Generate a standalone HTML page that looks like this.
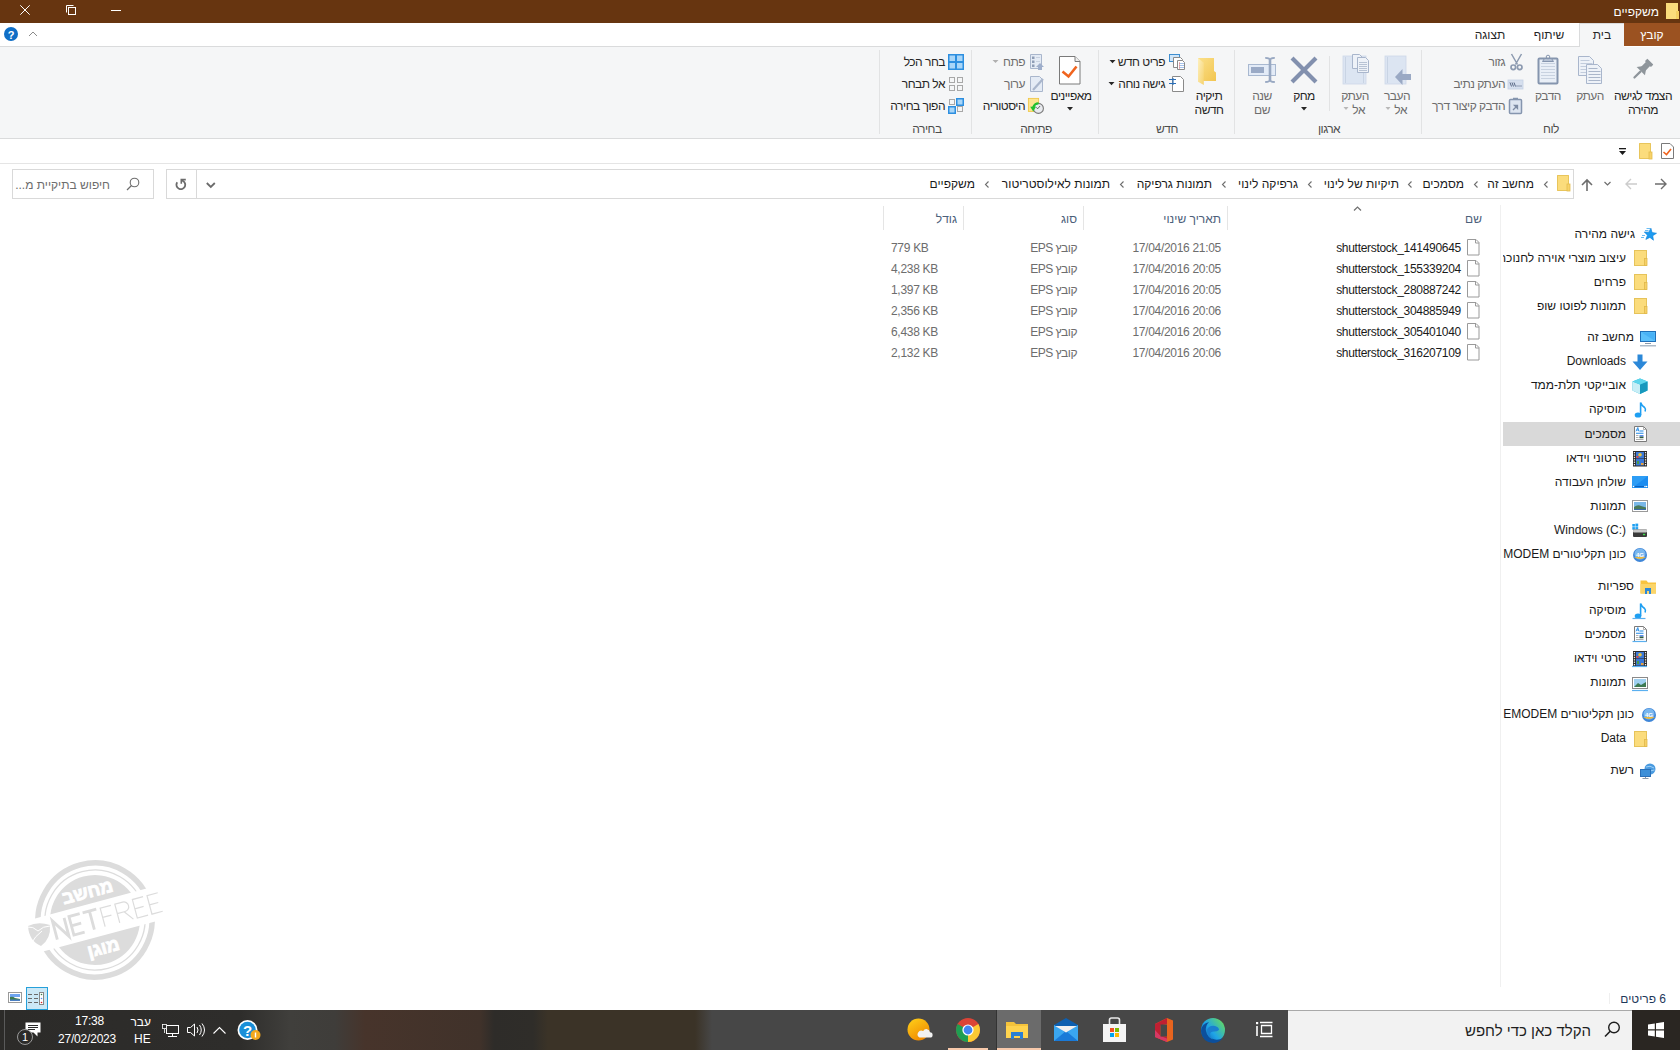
<!DOCTYPE html>
<html><head><meta charset="utf-8">
<style>
*{margin:0;padding:0;box-sizing:border-box}
html,body{width:1680px;height:1050px;overflow:hidden;background:#fff;font-family:"Liberation Sans",sans-serif;font-size:12px;color:#1e1e1e}
.a{position:absolute}
.t{position:absolute;white-space:nowrap;line-height:20px;font-size:12px}
.r{direction:rtl}
.rb{letter-spacing:-0.5px}
.c{text-align:center}
.l{letter-spacing:-0.3px}
svg{position:absolute;overflow:visible}
</style></head><body>

<!-- TITLE BAR -->
<div class="a" style="left:0;top:0;width:1680px;height:23px;background:#673510"></div>
<div class="t r" style="right:21px;top:2px;color:#fff">משקפיים</div>

<!-- TAB ROW -->
<div class="a" style="left:0;top:23px;width:1680px;height:24px;background:#fff"></div>
<div class="a" style="left:0;top:46px;width:1579px;height:1px;background:#dadbdc"></div>
<div class="a" style="left:1624px;top:23px;width:56px;height:23px;background:#9b5221"></div>
<div class="a" style="left:1579px;top:23px;width:45px;height:24px;background:#f5f6f7;border-left:1px solid #dadbdc;border-top:1px solid #dadbdc"></div>
<div class="t c r" style="left:1624px;width:56px;top:25px;color:#fff">קובץ</div>
<div class="t c r" style="left:1580px;width:44px;top:25px;color:#262626">בית</div>
<div class="t c r" style="left:1519px;width:60px;top:25px;color:#262626">שיתוף</div>
<div class="t c r" style="left:1460px;width:60px;top:25px;color:#262626">תצוגה</div>

<!-- RIBBON -->
<div class="a" style="left:0;top:47px;width:1680px;height:91px;background:#f5f6f7"></div>
<div class="a" style="left:0;top:138px;width:1680px;height:1px;background:#dadbdc"></div>
<!-- group separators -->
<div class="a" style="left:879px;top:50px;width:1px;height:84px;background:#e2e3e4"></div>
<div class="a" style="left:971px;top:50px;width:1px;height:84px;background:#e2e3e4"></div>
<div class="a" style="left:1098px;top:50px;width:1px;height:84px;background:#e2e3e4"></div>
<div class="a" style="left:1234px;top:50px;width:1px;height:84px;background:#e2e3e4"></div>
<div class="a" style="left:1329px;top:56px;width:1px;height:55px;background:#e2e3e4"></div>
<div class="a" style="left:1421px;top:50px;width:1px;height:84px;background:#e2e3e4"></div>

<!-- group labels -->
<div class="t c r rb" style="left:1511px;width:80px;top:119px;color:#4d4d4d">לוח</div>
<div class="t c r rb" style="left:1289px;width:80px;top:119px;color:#4d4d4d">ארגון</div>
<div class="t c r rb" style="left:1127px;width:80px;top:119px;color:#4d4d4d">חדש</div>
<div class="t c r rb" style="left:996px;width:80px;top:119px;color:#4d4d4d">פתיחה</div>
<div class="t c r rb" style="left:887px;width:80px;top:119px;color:#4d4d4d">בחירה</div>

<!-- clipboard group -->
<div class="t c r rb" style="left:1603px;width:80px;top:86px;color:#262626">הצמד לגישה</div>
<div class="t c r rb" style="left:1603px;width:80px;top:100px;color:#262626">מהירה</div>
<div class="t c r rb" style="left:1550px;width:80px;top:86px;color:#6d6d6d">העתק</div>
<div class="t c r rb" style="left:1508px;width:80px;top:86px;color:#6d6d6d">הדבק</div>
<div class="t r rb" style="right:175px;top:52px;color:#6d6d6d">גזור</div>
<div class="t r rb" style="right:175px;top:74px;color:#6d6d6d">העתק נתיב</div>
<div class="t r rb" style="right:175px;top:96px;color:#6d6d6d">הדבק קיצור דרך</div>

<!-- organize group -->
<div class="t c r rb" style="left:1357px;width:80px;top:86px;color:#6d6d6d">העבר</div>
<div class="t r rb" style="right:273px;top:100px;color:#6d6d6d">אל</div>
<div class="t c r rb" style="left:1315px;width:80px;top:86px;color:#6d6d6d">העתק</div>
<div class="t r rb" style="right:315px;top:100px;color:#6d6d6d">אל</div>
<div class="t c r rb" style="left:1264px;width:80px;top:86px;color:#262626">מחק</div>
<div class="t c r rb" style="left:1222px;width:80px;top:86px;color:#6d6d6d">שנה</div>
<div class="t c r rb" style="left:1222px;width:80px;top:100px;color:#6d6d6d">שם</div>

<!-- new group -->
<div class="t c r rb" style="left:1169px;width:80px;top:86px;color:#262626">תיקיה</div>
<div class="t c r rb" style="left:1169px;width:80px;top:100px;color:#262626">חדשה</div>
<div class="t r rb" style="right:515px;top:52px;color:#262626">פריט חדש</div>
<div class="t r rb" style="right:515px;top:74px;color:#262626">גישה נוחה</div>

<!-- open group -->
<div class="t c r rb" style="left:1031px;width:80px;top:86px;color:#262626">מאפיינים</div>
<div class="t r rb" style="right:655px;top:52px;color:#6d6d6d">פתח</div>
<div class="t r rb" style="right:655px;top:74px;color:#6d6d6d">ערוך</div>
<div class="t r rb" style="right:655px;top:96px;color:#262626">היסטוריה</div>

<!-- select group -->
<div class="t r rb" style="right:735px;top:52px;color:#262626">בחר הכל</div>
<div class="t r rb" style="right:735px;top:74px;color:#262626">אל תבחר</div>
<div class="t r rb" style="right:735px;top:96px;color:#262626">הפוך בחירה</div>

<!-- dropdown arrows -->
<svg style="left:0;top:0" width="1680" height="1050" viewBox="0 0 1680 1050">
 <path d="M1301 107h6l-3 3.5z" fill="#262626"/>
 <path d="M1067 107h6l-3 3.5z" fill="#262626"/>
 <path d="M1109.5 60h6l-3 3.2z" fill="#262626"/>
 <path d="M1108.5 82h6l-3 3.2z" fill="#262626"/>
 <path d="M992.5 60h6l-3 3z" fill="#b0b0b0"/>
 <path d="M1385.5 107h5l-2.5 3z" fill="#b8b8b8"/>
 <path d="M1343.5 107h5l-2.5 3z" fill="#b8b8b8"/>
</svg>



<svg style="left:0;top:0" width="1680" height="1050" viewBox="0 0 1680 1050">
<!-- pin -->
<g transform="translate(1642 70) rotate(45) scale(0.84)" fill="#8e959b">
 <rect x="-5" y="-14" width="10" height="4" rx="0.5"/>
 <rect x="-3.5" y="-10.5" width="7" height="8.5"/>
 <path d="M-3.5 -3 L-7 2 L7 2 L3.5 -3z"/>
 <rect x="-1.3" y="1.5" width="2.6" height="12.5" rx="1.2"/>
</g>
<!-- copy -->
<path d="M1578.5 56.5h11l4 4v15h-15z" fill="#eef2f8" stroke="#a9b6cc"/>
<path d="M1580.5 60.5h9 M1580.5 63.5h12 M1580.5 66.5h12 M1580.5 69.5h12 M1580.5 72.5h12" stroke="#c2ccdc"/>
<path d="M1586.5 64.5h11l4 4v15h-15z" fill="#eef2f8" stroke="#a9b6cc"/>
<path d="M1588.5 68.5h9 M1588.5 71.5h12 M1588.5 74.5h12 M1588.5 77.5h12 M1588.5 80.5h12" stroke="#aab6ca"/>
<!-- paste -->
<rect x="1538.5" y="58.5" width="19" height="25" rx="1" fill="#e9eff7" stroke="#8595ae" stroke-width="2"/>
<path d="M1541 63.5h14 M1541 66.5h14 M1541 69.5h14 M1541 72.5h14 M1541 75.5h14 M1541 78.5h14" stroke="#c8d2e0"/>
<path d="M1542.5 61.5l2-3h7l2 3z" fill="#b4c0d2" stroke="#8595ae"/>
<circle cx="1548" cy="57" r="1.8" fill="none" stroke="#8595ae"/>
<!-- scissors -->
<g stroke="#8c9ab0" fill="none">
 <path d="M1511.5 54 L1517.5 64.5 M1521.5 54 L1515.5 64.5" stroke-width="1.5"/>
 <circle cx="1513.3" cy="67.3" r="2.3" stroke-width="1.7"/><circle cx="1519.7" cy="67.3" r="2.3" stroke-width="1.7"/>
</g>
<!-- copy path -->
<rect x="1508" y="80" width="15" height="9" fill="#d6dfee" stroke="#c5d1e4" stroke-width="0.8"/>
<path d="M1510 82.5l1.5 4 M1512 82.5l1.5 4 M1514 82.5l1.5 4" stroke="#4a5a78" stroke-width="0.9"/>
<path d="M1516.5 86h1 M1518.5 86h1 M1520.5 86h1" stroke="#4a5a78"/>
<!-- paste shortcut -->
<rect x="1509.5" y="99.5" width="12" height="14" rx="1" fill="#dde5f0" stroke="#8595ae" stroke-width="1.5"/>
<path d="M1513 98.5h5" stroke="#8595ae" stroke-width="1.5"/>
<path d="M1513 110l4-4 M1514.5 105.5h3v3z" stroke="#7d8ba3" fill="#7d8ba3" stroke-width="1.3"/>

<!-- move to -->
<rect x="1385" y="56" width="21" height="28" fill="#dce5f2" stroke="#cdd8e8" stroke-width="0.8"/>
<path d="M1387.5 57v26" stroke="#c9d4e4"/>
<path d="M1395 77 L1402.5 69 V74 H1411 V80 H1402.5 V85z" fill="#9aa9c4"/>
<!-- copy to -->
<rect x="1343" y="56" width="23" height="28" fill="#dce5f2" stroke="#cdd8e8" stroke-width="0.8"/>
<path d="M1345.5 57v26 M1363.5 57v26" stroke="#c9d4e4"/>
<path d="M1352.5 54.5h7l3 3v11h-10z" fill="#eef2f8" stroke="#a9b6cc"/>
<path d="M1357.5 57.5h8l3 3v12h-11z" fill="#eef2f8" stroke="#a9b6cc"/>
<path d="M1359 62.5h8 M1359 64.5h8 M1359 66.5h8 M1359 68.5h8 M1359 70.5h8" stroke="#aab6ca" stroke-width="0.8"/>
<!-- delete -->
<path d="M1293.5 59.5 L1314.5 80.5 M1314.5 59.5 L1293.5 80.5" stroke="#8290ae" stroke-width="4.2" stroke-linecap="square"/>
<!-- rename -->
<rect x="1248.5" y="64.5" width="27" height="11" fill="#e3ebf7" stroke="#a8b8d0"/>
<rect x="1251" y="67" width="13" height="6" fill="#9aaac6"/>
<path d="M1270 59.5v21" stroke="#98a8c2" stroke-width="2.6"/>
<path d="M1265.2 57.8 q4.8 0 4.8 2.5 q0 -2.5 4.8 -2.5 M1265.2 82 q4.8 0 4.8 -2.5 q0 2.5 4.8 2.5" fill="none" stroke="#98a8c2" stroke-width="1.8"/>
<!-- new folder -->
<defs><linearGradient id="nfb" x1="0" y1="0" x2="1" y2="1"><stop offset="0" stop-color="#fbe08a"/><stop offset="1" stop-color="#f2c550"/></linearGradient>
<linearGradient id="nff" x1="0" y1="0" x2="1" y2="1"><stop offset="0" stop-color="#fdf0c0"/><stop offset="1" stop-color="#f6d26c"/></linearGradient></defs>
<path d="M1198 58 H1214 V71 L1216 72.5 V81 H1203 L1198 81.5z" fill="url(#nfb)"/>
<path d="M1198 58 L1203.8 62.8 V85 L1198 81.8z" fill="url(#nff)"/>
<!-- new item -->
<rect x="1169.5" y="54.5" width="10" height="7" fill="#cfe6fa" stroke="#3e8ed0"/>
<path d="M1173.5 57.5h7l2 2v8h-9z" fill="#fff" stroke="#8a8a8a"/>
<path d="M1177.5 60.5h5l2 2v7h-7z" fill="#fff" stroke="#8a8a8a"/>
<path d="M1179 63.5h5 M1179 65.5h5 M1179 67.5h5" stroke="#8fb4e6" stroke-width="0.8"/>
<path d="M1179.5 62v7" stroke="#e57a7a" stroke-width="0.6"/>
<!-- easy access -->
<path d="M1172.5 76.5h8l3 3v12h-11z" fill="#fff" stroke="#8a8a8a"/>
<path d="M1169 79.5h7 M1169 83.5h7 M1173 78v7" stroke="#2a6fb8" stroke-width="1.1"/>
<!-- properties -->
<path d="M1059.5 56.5h15.5l5 5v22.5h-20.5z" fill="#fff" stroke="#7a7a7a"/>
<path d="M1075 56.5v5h5" fill="#eee" stroke="#7a7a7a"/>
<path d="M1062.5 71.5 L1068.5 76.5 L1076.5 66.5" fill="none" stroke="#f0641e" stroke-width="2.6"/>
<!-- open -->
<path d="M1030.5 54.5h11v14h-11z" fill="#e4ebf5" stroke="#a9b6cc"/>
<path d="M1032 56.5h2.5v2.5h-2.5z M1032 60.5h2.5v2.5h-2.5z M1032 64.5h2.5v2.5h-2.5z" fill="#8e9db6"/>
<path d="M1036 57.5h4 M1036 61.5h4" stroke="#c0cadb" stroke-width="0.8"/>
<path d="M1040 63 L1044 67 H1042 V70 H1038 V67 H1036z" fill="#9eaecb"/>
<!-- edit -->
<path d="M1030.5 76.5h9l3 3v12h-12z" fill="#e4ebf5" stroke="#a9b6cc"/>
<path d="M1033 90 L1043 79" stroke="#a9b6cc" stroke-width="2.2"/>
<!-- history -->
<rect x="1028.4" y="98.4" width="10.2" height="13" fill="#fde58f" stroke="#efc84a" stroke-width="0.9"/>
<circle cx="1038.4" cy="108.4" r="5" fill="#e9ebef" stroke="#7a7a7a" stroke-width="1.1"/>
<path d="M1036.3 107.3 l1.3 1.5 l2.5 -2.8" stroke="#444" stroke-width="0.8" fill="none"/>
<path d="M1038.5 103.4 q-4 0 -5.2 4" stroke="#22c02e" stroke-width="2.2" fill="none"/>
<path d="M1030.2 106.8 L1036.2 106.4 L1033.2 111.4z" fill="#22c02e"/>
<!-- select all -->
<rect x="948" y="54" width="16" height="16" fill="#2d8fe0"/>
<rect x="949.5" y="55.5" width="5.5" height="5.5" fill="#a9d6f8"/>
<rect x="957" y="55.5" width="5.5" height="5.5" fill="#a9d6f8"/>
<rect x="949.5" y="63" width="5.5" height="5.5" fill="#a9d6f8"/>
<rect x="957" y="63" width="5.5" height="5.5" fill="#a9d6f8"/>
<!-- select none -->
<g fill="none" stroke="#a8a8a8">
<rect x="949.5" y="77.5" width="5" height="5"/><rect x="957.5" y="77.5" width="5" height="5"/>
<rect x="949.5" y="85.5" width="5" height="5"/><rect x="957.5" y="85.5" width="5" height="5"/>
<rect x="949.5" y="99.5" width="5" height="5"/><rect x="957.5" y="106.5" width="5" height="5"/>
</g>
<!-- invert -->
<rect x="956" y="98" width="8" height="8" fill="#2d8fe0"/><rect x="957.5" y="99.5" width="5" height="5" fill="#a9d6f8"/>
<rect x="948" y="106" width="8" height="8" fill="#2d8fe0"/><rect x="949.5" y="107.5" width="5" height="5" fill="#a9d6f8"/>
</svg>

<!-- QAT ROW -->
<div class="a" style="left:0;top:163px;width:1680px;height:1px;background:#e5e5e5"></div>

<!-- ADDRESS ROW -->
<div class="a" style="left:166px;top:169px;width:1408px;height:30px;border:1px solid #d9d9d9"></div>
<div class="a" style="left:196px;top:170px;width:1px;height:28px;background:#d9d9d9"></div>
<div class="a" style="left:12px;top:169px;width:142px;height:30px;border:1px solid #d9d9d9"></div>
<div class="t r" style="right:1570px;top:175px;color:#6d6d6d">חיפוש בתיקיית מ...</div>

<!-- QAT icons -->
<svg style="left:0;top:0" width="1680" height="1050" viewBox="0 0 1680 1050">
 <path d="M1661.5 143.5h8.5l3.5 3.5v11.5h-12z" fill="#fff" stroke="#7a7a7a"/>
 <path d="M1663.5 152 l3 2.5 l4.5-5.5" fill="none" stroke="#f0641e" stroke-width="1.6"/>
 <rect x="1639" y="143" width="12" height="16" fill="#fbdc7c"/>
 <path d="M1639.5 143.5h11v15h-11z" fill="none" stroke="#e8c55c"/>
 <rect x="1649" y="152" width="3" height="7" fill="#f7d26a" stroke="#e3bc4c" stroke-width="0.8"/>
 <rect x="1619" y="148" width="7" height="1.3" fill="#1a1a1a"/>
 <path d="M1619 151h7l-3.5 4z" fill="#1a1a1a"/>
 <!-- nav arrows -->
 <path d="M1655 184h11 M1661 179l5 5l-5 5" fill="none" stroke="#6d6d6d" stroke-width="1.4"/>
 <path d="M1637 184h-11 M1631 179l-5 5l5 5" fill="none" stroke="#cccccc" stroke-width="1.4"/>
 <path d="M1604.5 182l3 3l3-3" fill="none" stroke="#6d6d6d" stroke-width="1.2"/>
 <path d="M1587 191v-11 M1582 185l5-5l5 5" fill="none" stroke="#6d6d6d" stroke-width="1.6"/>
 <!-- address folder -->
 <rect x="1557" y="175" width="12" height="16" fill="#fbdc7c"/>
 <path d="M1557.5 175.5h11v15h-11z" fill="none" stroke="#e8c55c"/>
 <rect x="1567" y="184" width="3" height="7" fill="#f7d26a" stroke="#e3bc4c" stroke-width="0.8"/>
 <!-- refresh, dropdown -->
 <path d="M177.2 182.3 A4.4 4.4 0 1 0 181.3 180.4" fill="none" stroke="#6b6b6b" stroke-width="1.8"/>
 <path d="M185.8 179.6 h-4.5 v4.2" fill="none" stroke="#6b6b6b" stroke-width="1.6"/>
 
 <path d="M206.8 183l4 4l4-4" fill="none" stroke="#6b6b6b" stroke-width="1.8"/>
 <!-- search magnifier -->
 <circle cx="134.5" cy="182.5" r="4.3" fill="none" stroke="#6d6d6d" stroke-width="1.1"/>
 <path d="M131.5 185.5 L127 190" stroke="#6d6d6d" stroke-width="1.2"/>
 <!-- breadcrumb chevrons -->
 <g fill="none" stroke="#6d6d6d" stroke-width="1.1">
 <path d="M1547.5 181.5l-3 3l3 3"/>
 <path d="M1477.5 181.5l-3 3l3 3"/>
 <path d="M1411.5 181.5l-3 3l3 3"/>
 <path d="M1311.5 181.5l-3 3l3 3"/>
 <path d="M1225.5 181.5l-3 3l3 3"/>
 <path d="M1123.5 181.5l-3 3l3 3"/>
 <path d="M988.5 181.5l-3 3l3 3"/>
 </g>
 <!-- sort arrow -->
 <path d="M1354 210.5l3.5-3.5l3.5 3.5" fill="none" stroke="#707070" stroke-width="1.2"/>
 <!-- file icons -->
 <g fill="#fff" stroke="#9a9a9a">
 <path d="M1467.5 239.5h8.5l3 3v12.5h-11.5z"/><path d="M1475.5 239.5v3.5h3.5" fill="none"/>
 <path d="M1467.5 260.5h8.5l3 3v12.5h-11.5z"/><path d="M1475.5 260.5v3.5h3.5" fill="none"/>
 <path d="M1467.5 281.5h8.5l3 3v12.5h-11.5z"/><path d="M1475.5 281.5v3.5h3.5" fill="none"/>
 <path d="M1467.5 302.5h8.5l3 3v12.5h-11.5z"/><path d="M1475.5 302.5v3.5h3.5" fill="none"/>
 <path d="M1467.5 323.5h8.5l3 3v12.5h-11.5z"/><path d="M1475.5 323.5v3.5h3.5" fill="none"/>
 <path d="M1467.5 344.5h8.5l3 3v12.5h-11.5z"/><path d="M1475.5 344.5v3.5h3.5" fill="none"/>
 </g>
</svg>

<!-- breadcrumbs -->
<div class="t r" style="right:146px;top:174px;color:#1a1a1a">מחשב זה</div>
<div class="t r" style="right:216px;top:174px;color:#1a1a1a">מסמכים</div>
<div class="t r" style="right:281px;top:174px;color:#1a1a1a">תיקיות של לינוי</div>
<div class="t r" style="right:382px;top:174px;color:#1a1a1a">גרפיקה לינוי</div>
<div class="t r" style="right:468px;top:174px;color:#1a1a1a">תמונות גרפיקה</div>
<div class="t r" style="right:570px;top:174px;color:#1a1a1a">תמונות לאילוסטריטור</div>
<div class="t r" style="right:705px;top:174px;color:#1a1a1a">משקפיים</div>

<!-- column headers -->
<div class="a" style="left:883px;top:206px;width:1px;height:24px;background:#e5e5e5"></div>
<div class="a" style="left:963px;top:206px;width:1px;height:24px;background:#e5e5e5"></div>
<div class="a" style="left:1083px;top:206px;width:1px;height:24px;background:#e5e5e5"></div>
<div class="a" style="left:1227px;top:206px;width:1px;height:24px;background:#e5e5e5"></div>
<div class="t r" style="right:198px;top:209px;color:#4c607a">שם</div>
<div class="t r" style="right:459px;top:209px;color:#4c607a">תאריך שינוי</div>
<div class="t r" style="right:603px;top:209px;color:#4c607a">סוג</div>
<div class="t r" style="right:723px;top:209px;color:#4c607a">גודל</div>


<!-- CONTENT -->
<div class="a" style="left:1500px;top:205px;width:1px;height:782px;background:#f0f0f0"></div>
<!-- rows -->
<div class="t l" style="right:219px;top:238px;color:#1a1a1a">shutterstock_141490645</div>
<div class="t l" style="right:459px;top:238px;color:#6d6d6d">17/04/2016 21:05</div>
<div class="t r rb" style="right:603px;top:238px;color:#6d6d6d">קובץ EPS</div>
<div class="t l" style="left:891px;top:238px;color:#6d6d6d">779 KB</div>
<div class="t l" style="right:219px;top:259px;color:#1a1a1a">shutterstock_155339204</div>
<div class="t l" style="right:459px;top:259px;color:#6d6d6d">17/04/2016 20:05</div>
<div class="t r rb" style="right:603px;top:259px;color:#6d6d6d">קובץ EPS</div>
<div class="t l" style="left:891px;top:259px;color:#6d6d6d">4,238 KB</div>
<div class="t l" style="right:219px;top:280px;color:#1a1a1a">shutterstock_280887242</div>
<div class="t l" style="right:459px;top:280px;color:#6d6d6d">17/04/2016 20:05</div>
<div class="t r rb" style="right:603px;top:280px;color:#6d6d6d">קובץ EPS</div>
<div class="t l" style="left:891px;top:280px;color:#6d6d6d">1,397 KB</div>
<div class="t l" style="right:219px;top:301px;color:#1a1a1a">shutterstock_304885949</div>
<div class="t l" style="right:459px;top:301px;color:#6d6d6d">17/04/2016 20:06</div>
<div class="t r rb" style="right:603px;top:301px;color:#6d6d6d">קובץ EPS</div>
<div class="t l" style="left:891px;top:301px;color:#6d6d6d">2,356 KB</div>
<div class="t l" style="right:219px;top:322px;color:#1a1a1a">shutterstock_305401040</div>
<div class="t l" style="right:459px;top:322px;color:#6d6d6d">17/04/2016 20:06</div>
<div class="t r rb" style="right:603px;top:322px;color:#6d6d6d">קובץ EPS</div>
<div class="t l" style="left:891px;top:322px;color:#6d6d6d">6,438 KB</div>
<div class="t l" style="right:219px;top:343px;color:#1a1a1a">shutterstock_316207109</div>
<div class="t l" style="right:459px;top:343px;color:#6d6d6d">17/04/2016 20:06</div>
<div class="t r rb" style="right:603px;top:343px;color:#6d6d6d">קובץ EPS</div>
<div class="t l" style="left:891px;top:343px;color:#6d6d6d">2,132 KB</div>

<!-- NAV -->
<div class="a" style="left:1503px;top:422px;width:177px;height:24px;background:#d9d9d9"></div>
<div class="a" style="left:1503px;top:205px;width:177px;height:780px;overflow:hidden">
<div class="t r" style="right:45px;top:19px;color:#1a1a1a">גישה מהירה</div>
<div class="t r" style="right:54px;top:43px;color:#1a1a1a">עיצוב מוצרי אוירה לחנוכה</div>
<div class="t r" style="right:54px;top:67px;color:#1a1a1a">פרחים</div>
<div class="t r" style="right:54px;top:91px;color:#1a1a1a">תמונות לפוטו שופ</div>
<div class="t r" style="right:46px;top:122px;color:#1a1a1a">מחשב זה</div>
<div class="t" style="right:54px;top:146px;color:#1a1a1a">Downloads</div>
<div class="t r" style="right:54px;top:170px;color:#1a1a1a">אובייקטי תלת-ממד</div>
<div class="t r" style="right:54px;top:194px;color:#1a1a1a">מוסיקה</div>
<div class="t r" style="right:54px;top:219px;color:#1a1a1a">מסמכים</div>
<div class="t r" style="right:54px;top:243px;color:#1a1a1a">סרטוני וידאו</div>
<div class="t r" style="right:54px;top:267px;color:#1a1a1a">שולחן העבודה</div>
<div class="t r" style="right:54px;top:291px;color:#1a1a1a">תמונות</div>
<div class="t" style="right:54px;top:315px;color:#1a1a1a">Windows (C:)</div>
<div class="t r" style="right:54px;top:339px;color:#1a1a1a">כונן תקליטורים MODEM</div>
<div class="t r" style="right:46px;top:371px;color:#1a1a1a">ספריות</div>
<div class="t r" style="right:54px;top:395px;color:#1a1a1a">מוסיקה</div>
<div class="t r" style="right:54px;top:419px;color:#1a1a1a">מסמכים</div>
<div class="t r" style="right:54px;top:443px;color:#1a1a1a">סרטי וידאו</div>
<div class="t r" style="right:54px;top:467px;color:#1a1a1a">תמונות</div>
<div class="t r" style="right:46px;top:499px;color:#1a1a1a">כונן תקליטורים EMODEM</div>
<div class="t" style="right:54px;top:523px;color:#1a1a1a">Data</div>
<div class="t r" style="right:46px;top:555px;color:#1a1a1a">רשת</div>
</div>
<svg style="left:0;top:0" width="1680" height="1050" viewBox="0 0 1680 1050">
<g><path d="M1650.88 228.14 L1652.07 232.52 L1656.56 233.25 L1652.76 235.74 L1653.45 240.23 L1649.91 237.38 L1645.85 239.43 L1647.46 235.18 L1644.26 231.96 L1648.80 232.18z" fill="#1e9bf0" stroke="#0a7fd8" stroke-width="0.6" stroke-linejoin="round"/><path d="M1646.5 228.5h3.5 M1645 230.5h3.5 M1642 235.5h3 M1641 237.5h3" stroke="#3aa6f0" stroke-width="1" opacity="0.75"/></g>
<g transform="translate(1634 250)"><rect x="0.5" y="0.5" width="12" height="15" fill="#fbdc7c" stroke="#e6c35a"/><rect x="10.5" y="8.5" width="2.5" height="7" fill="#f6d068" stroke="#e0b84a" stroke-width="0.8"/></g>
<g transform="translate(1634 274)"><rect x="0.5" y="0.5" width="12" height="15" fill="#fbdc7c" stroke="#e6c35a"/><rect x="10.5" y="8.5" width="2.5" height="7" fill="#f6d068" stroke="#e0b84a" stroke-width="0.8"/></g>
<g transform="translate(1634 298)"><rect x="0.5" y="0.5" width="12" height="15" fill="#fbdc7c" stroke="#e6c35a"/><rect x="10.5" y="8.5" width="2.5" height="7" fill="#f6d068" stroke="#e0b84a" stroke-width="0.8"/></g>
<g transform="translate(1640 331)"><rect x="0.5" y="0.5" width="15" height="10" fill="#5cc0fa" stroke="#1f6fb8"/><path d="M1.5 1.5h13v8z" fill="#3aa6f2" opacity="0.6"/><path d="M5 12.5h6" stroke="#8a9aaa" stroke-width="1"/><path d="M0 14.8h16" stroke="#9aaabb" stroke-width="1.2"/></g>
<g transform="translate(1632 354)"><path d="M5.5 0.5h5v7h5l-7.5 8.5l-7.5-8.5h5z" fill="#2b88d8"/></g>
<g transform="translate(1632 378)"><path d="M8 0.5l7.5 3v9l-7.5 3.5l-7.5-3.5v-9z" fill="#22b8d8"/><path d="M0.5 3.5l7.5 3v9.5l-7.5-3.5z" fill="#c8eef6"/><path d="M8 6.5l7.5-3v9l-7.5 3.5z" fill="#1798bd"/><path d="M8 0.5l7.5 3l-7.5 3l-7.5-3z" fill="#5fd6ec"/></g>
<g transform="translate(1632 402)"><ellipse cx="6" cy="13" rx="3.3" ry="2.6" fill="#1e9ff2"/><path d="M8.6 13V0.5 q1 3 4 5 q1.5 1.5 0.5 4" fill="none" stroke="#1e9ff2" stroke-width="1.6"/></g>
<g transform="translate(1632 426)"><path d="M2.5 0.5h9l3 3v12h-12z" fill="#fff" stroke="#7a7a7a"/><path d="M11.5 0.5v3h3" fill="none" stroke="#9a9a9a" stroke-width="0.8"/><path d="M4 5.3 L5.8 1.5 L6.8 5.3 M4.6 4h2" stroke="#1e88e5" stroke-width="0.9" fill="none"/><path d="M7.5 5h4 M4 7.2h7.5" stroke="#1e88e5" stroke-width="1.1"/><path d="M4 9.5h2.5 M4 11.5h2.5 M4 13.5h7.5" stroke="#9a9a9a" stroke-width="0.8"/><rect x="7.5" y="9" width="4" height="1.6" fill="#5a8ef0"/><rect x="7.5" y="10.6" width="4" height="1.6" fill="#2f5a3a"/></g>
<g transform="translate(1633 451)"><rect x="0" y="0" width="14" height="15.5" fill="#2a2a2a"/><rect x="3" y="1" width="8" height="6.5" fill="#3a78d8"/><rect x="3" y="8" width="8" height="6.5" fill="#3a78d8"/><circle cx="7" cy="3.8" r="1.8" fill="#e8c23a"/><rect x="3.5" y="5" width="2" height="2" fill="#d44"/><rect x="8" y="12" width="2.5" height="2" fill="#e8a03a"/><rect x="4" y="10" width="2" height="3" fill="#4a9a4a"/><rect x="0.8" y="1.0" width="1.3" height="1.3" fill="#eee"/><rect x="11.9" y="1.0" width="1.3" height="1.3" fill="#eee"/><rect x="0.8" y="3.4" width="1.3" height="1.3" fill="#eee"/><rect x="11.9" y="3.4" width="1.3" height="1.3" fill="#eee"/><rect x="0.8" y="5.8" width="1.3" height="1.3" fill="#eee"/><rect x="11.9" y="5.8" width="1.3" height="1.3" fill="#eee"/><rect x="0.8" y="8.2" width="1.3" height="1.3" fill="#eee"/><rect x="11.9" y="8.2" width="1.3" height="1.3" fill="#eee"/><rect x="0.8" y="10.6" width="1.3" height="1.3" fill="#eee"/><rect x="11.9" y="10.6" width="1.3" height="1.3" fill="#eee"/><rect x="0.8" y="13.0" width="1.3" height="1.3" fill="#eee"/><rect x="11.9" y="13.0" width="1.3" height="1.3" fill="#eee"/></g>
<g transform="translate(1632 474)"><rect x="0" y="2" width="16" height="12" fill="#1a8cf0"/><path d="M0 2h16l-16 12z" fill="#3aa8f8" opacity="0.6"/><path d="M1.5 12.5h13" stroke="#0b63c0" stroke-width="1"/><circle cx="1.6" cy="12.5" r="0.8" fill="#fff"/><circle cx="13" cy="12.5" r="0.8" fill="#fff"/><circle cx="14.6" cy="12.5" r="0.8" fill="#fff"/></g>
<g transform="translate(1632 498)"><rect x="0.5" y="2.5" width="15" height="11" fill="#fff" stroke="#9a9a9a"/><rect x="2" y="4" width="12" height="8" fill="#7ab8e8"/><path d="M2 9 q4 -3 7 -1 l5 1.5 V12 H2z" fill="#4a7a5a"/><path d="M2 11 h12 v1 h-12z" fill="#3a6aa8"/></g>
<g transform="translate(1632 523)"><rect x="0.3" y="1" width="2.6" height="2.6" fill="#1ea0f2"/><rect x="3.4" y="0.6" width="2.8" height="3" fill="#1ea0f2"/><rect x="0.3" y="4.1" width="2.6" height="2.6" fill="#1ea0f2"/><rect x="3.4" y="4.1" width="2.8" height="2.6" fill="#1ea0f2"/><rect x="1" y="6.5" width="14" height="7.5" rx="1" fill="#3a3a3a"/><rect x="1" y="6.5" width="14" height="3" rx="1" fill="#c9c9c9"/><rect x="11" y="10.8" width="2.2" height="1.4" fill="#3ee04a"/></g>
<g transform="translate(1632 547)"><circle cx="8" cy="8" r="7" fill="#3f86d8"/><circle cx="8" cy="7" r="5.5" fill="#7ab7ee"/><path d="M2 10 q6 4 12 0" fill="#e8b840"/><text x="8" y="10" font-size="6" font-family="Liberation Sans" font-weight="bold" fill="#fff" text-anchor="middle">4G</text></g>
<g transform="translate(1640 579)"><path d="M0.5 1.5h6l1.5 2h8v11h-15.5z" fill="#f8c440"/><rect x="0.5" y="5" width="15.5" height="9.5" fill="#fbd56a"/><path d="M5 15v-6h6v6h-2v-3h-2v3z" fill="#2b88d8"/></g>
<g transform="translate(1632 603)"><ellipse cx="6" cy="13" rx="3.3" ry="2.6" fill="#1e9ff2"/><path d="M8.6 13V0.5 q1 3 4 5 q1.5 1.5 0.5 4" fill="none" stroke="#1e9ff2" stroke-width="1.6"/><path d="M0.5 15.5h13" stroke="#5ab0f0" stroke-width="1.2"/></g>
<g transform="translate(1632 626)"><path d="M2.5 0.5h9l3 3v12h-12z" fill="#fff" stroke="#7a7a7a"/><path d="M11.5 0.5v3h3" fill="none" stroke="#9a9a9a" stroke-width="0.8"/><path d="M4 5.3 L5.8 1.5 L6.8 5.3 M4.6 4h2" stroke="#1e88e5" stroke-width="0.9" fill="none"/><path d="M7.5 5h4 M4 7.2h7.5" stroke="#1e88e5" stroke-width="1.1"/><path d="M4 9.5h2.5 M4 11.5h2.5 M4 13.5h7.5" stroke="#9a9a9a" stroke-width="0.8"/><rect x="7.5" y="9" width="4" height="1.6" fill="#5a8ef0"/><rect x="7.5" y="10.6" width="4" height="1.6" fill="#2f5a3a"/><path d="M0.5 15.5h14" stroke="#5ab0f0" stroke-width="1.2"/></g>
<g transform="translate(1633 651)"><rect x="0" y="0" width="14" height="15.5" fill="#2a2a2a"/><rect x="3" y="1" width="8" height="6.5" fill="#3a78d8"/><rect x="3" y="8" width="8" height="6.5" fill="#3a78d8"/><circle cx="7" cy="3.8" r="1.8" fill="#e8c23a"/><rect x="3.5" y="5" width="2" height="2" fill="#d44"/><rect x="8" y="12" width="2.5" height="2" fill="#e8a03a"/><rect x="4" y="10" width="2" height="3" fill="#4a9a4a"/><rect x="0.8" y="1.0" width="1.3" height="1.3" fill="#eee"/><rect x="11.9" y="1.0" width="1.3" height="1.3" fill="#eee"/><rect x="0.8" y="3.4" width="1.3" height="1.3" fill="#eee"/><rect x="11.9" y="3.4" width="1.3" height="1.3" fill="#eee"/><rect x="0.8" y="5.8" width="1.3" height="1.3" fill="#eee"/><rect x="11.9" y="5.8" width="1.3" height="1.3" fill="#eee"/><rect x="0.8" y="8.2" width="1.3" height="1.3" fill="#eee"/><rect x="11.9" y="8.2" width="1.3" height="1.3" fill="#eee"/><rect x="0.8" y="10.6" width="1.3" height="1.3" fill="#eee"/><rect x="11.9" y="10.6" width="1.3" height="1.3" fill="#eee"/><rect x="0.8" y="13.0" width="1.3" height="1.3" fill="#eee"/><rect x="11.9" y="13.0" width="1.3" height="1.3" fill="#eee"/><path d="M-1 15.5h15" stroke="#5ab0f0" stroke-width="1.2"/></g>
<g transform="translate(1632 675)"><rect x="0.5" y="2.5" width="15" height="11" fill="#fff" stroke="#8a8a8a"/><rect x="2" y="4" width="12" height="8" fill="#9fd0f0"/><path d="M2 12 L6 8 L9 10 L14 7 V12z" fill="#3d7a52"/><path d="M0 15.5h16" stroke="#5ab0f0" stroke-width="1.2"/></g>
<g transform="translate(1641 707)"><circle cx="8" cy="8" r="7" fill="#3f86d8"/><circle cx="8" cy="7" r="5.5" fill="#7ab7ee"/><path d="M2 10 q6 4 12 0" fill="#e8b840"/><text x="8" y="10" font-size="6" font-family="Liberation Sans" font-weight="bold" fill="#fff" text-anchor="middle">4G</text></g>
<g transform="translate(1634 731)"><rect x="0.5" y="0.5" width="12" height="15" fill="#fbdc7c" stroke="#e6c35a"/><rect x="10.5" y="8.5" width="2.5" height="7" fill="#f6d068" stroke="#e0b84a" stroke-width="0.8"/></g>
<g transform="translate(1640 763)"><circle cx="10" cy="6" r="5.5" fill="#4a9be0"/><path d="M6 4 q4 -2 8 1 M5.5 7 q4 2 9 0" stroke="#9fd0f7" fill="none"/><rect x="0.5" y="6.5" width="10" height="7" fill="#3c8fd8" stroke="#2a70b8"/><path d="M5.5 14v2 M2.5 15.5h6" stroke="#8a9aaa"/></g>
</svg>


<!-- STATUS -->
<div class="t r" style="right:14px;top:989px;color:#1e395b">6 פריטים</div>
<div class="a" style="left:1609px;top:993px;width:1px;height:11px;background:#efefef"></div>

<!-- TITLE ICONS -->
<svg style="left:0;top:0" width="1680" height="1050" viewBox="0 0 1680 1050">
 <path d="M20.3 5.3l9.4 9.4 M29.7 5.3l-9.4 9.4" stroke="#fff" stroke-width="1"/>
 <path d="M66.5 12.5v-7h7" fill="none" stroke="#fff"/>
 <rect x="68.5" y="7.5" width="7" height="7" fill="none" stroke="#fff"/>
 <path d="M111 10.5h10" stroke="#fff"/>
 <rect x="1666" y="3" width="12" height="16" fill="#fbdc7c"/>
 <rect x="1676" y="11" width="3" height="8" fill="#f4cf63"/>
 <!-- help -->
 <circle cx="11" cy="34" r="7" fill="#0f6ec6"/>
 <text x="11" y="38.5" font-family="Liberation Sans" font-weight="bold" font-size="11" fill="#fff" text-anchor="middle">?</text>
 <path d="M29 36l4-4l4 4" fill="none" stroke="#8a8a8a" stroke-width="1"/>
 <!-- view buttons -->
 <rect x="8.5" y="992.5" width="13" height="10" fill="#fff" stroke="#9a9a9a"/>
 <rect x="10" y="994" width="10" height="3" fill="#6fa4f0"/>
 <path d="M10 1001 V997 q3 -1 5 1 l5 1 V1001z" fill="#3d7a52"/>
 <path d="M10 999.5 h10 v1.5 h-10z" fill="#4b7fc2"/>
 <rect x="26.5" y="987.5" width="21" height="22" fill="#cce8f6" stroke="#26a0da"/>
 <path d="M28 994.5h4 M34 994.5h4 M28 998.5h4 M34 998.5h4 M28 1002.5h4 M34 1002.5h4" stroke="#6a6a6a" stroke-width="1.2"/>
 <rect x="39.5" y="992.5" width="4" height="12" fill="#fff" stroke="#888"/>
 <circle cx="41.5" cy="994.5" r="0.8" fill="#3a7a4a"/><circle cx="41.5" cy="998.5" r="0.8" fill="#5a8ef0"/><circle cx="41.5" cy="1002.5" r="0.8" fill="#e02020"/>
</svg>

<!-- WATERMARK -->
<svg style="left:0;top:0" width="1680" height="1050" viewBox="0 0 1680 1050">
 <g transform="translate(95 920) rotate(-15)" >
  <circle r="57" fill="none" stroke="#dcdcdc" stroke-width="5.5"/>
  <circle r="50" fill="none" stroke="#dcdcdc" stroke-width="1.3"/>
  <circle r="45" fill="#dcdcdc"/>
  <rect x="-70" y="-17" width="150" height="34" fill="#fff"/>
  <text x="0" y="-23" font-family="Liberation Sans" font-weight="bold" font-size="18" fill="#fff" stroke="#fff" stroke-width="0.9" text-anchor="middle">מחשב</text>
  <text x="1" y="35" font-family="Liberation Sans" font-weight="bold" font-size="18" fill="#fff" stroke="#fff" stroke-width="0.9" text-anchor="middle">מוגן</text>
  <g fill="none" stroke="#dcdcdc" stroke-linejoin="miter" transform="translate(3 -1) scale(1.01)">
   <path d="M-44 10 V-9 L-32 10 V-9" stroke-width="2.8"/>
   <path d="M-16 -9 H-27 V10 H-16 M-27 0.5 H-17" stroke-width="2.8"/>
   <path d="M-13 -9 H1 M-6 -9 V10" stroke-width="2.8"/>
   <path d="M16 -9 H5 V10 M5 0.5 H14" stroke-width="1.2"/>
   <path d="M20 10 V-9 H28 a4.8 4.8 0 0 1 0 9.6 H20 M27 0.6 L34 10" stroke-width="1.2"/>
   <path d="M49 -9 H38 V10 H49 M38 0.5 H47" stroke-width="1.2"/>
   <path d="M64 -9 H53 V10 H64 M53 0.5 H62" stroke-width="1.2"/>
  </g>
 </g>
 <path d="M28 926 q10 -5 22 -1 q1 14 -9 21 q-12 -5 -13 -20z" fill="#dcdcdc"/>
 <path d="M27 927 q6 -1 11 4 q5 -5 12 -5 M31 944 q4 -8 11 -13" fill="none" stroke="#fff" stroke-width="1"/>
</svg>

<!-- TASKBAR -->
<div class="a" style="left:0;top:1010px;width:1680px;height:40px;background:linear-gradient(90deg,#2c2b29 0px,#2e2d2b 240px,#403f3c 290px,#3f3d3a 335px,#47342b 365px,#40322a 480px,#2e2c29 494px,#2f2d29 533px,#3b3327 548px,#3b3327 695px,#474747 712px,#474747 1288px)"></div>
<div class="a" style="left:997px;top:1010px;width:44px;height:40px;background:#6b6b6b"></div>
<div class="a" style="left:996px;top:1010px;width:1px;height:40px;background:#333"></div>
<div class="a" style="left:948px;top:1048px;width:40px;height:2px;background:#f7c9ab"></div>
<div class="a" style="left:997px;top:1048px;width:44px;height:2px;background:#f7c9ab"></div>
<div class="a" style="left:1288px;top:1010px;width:344px;height:40px;background:#f2f2f2;border-top:1px solid #a9a9a9"></div>
<div class="a" style="left:1632px;top:1010px;width:48px;height:40px;background:#2a2622"></div>
<div class="t r" style="right:89px;top:1021px;font-size:15px;color:#1e1e1e">הקלד כאן כדי לחפש</div>

<!-- TASKBAR CONTENT -->
<div class="a" style="left:4px;top:1010px;width:1px;height:40px;background:#5a5a5a"></div>
<div class="t l" style="left:75px;top:1011px;color:#fff;letter-spacing:-0.2px">17:38</div>
<div class="t l" style="left:58px;top:1029px;color:#fff;letter-spacing:-0.2px">27/02/2023</div>
<div class="t r" style="right:1529px;top:1012px;color:#fff">עבר</div>
<div class="t" style="left:134px;top:1029px;color:#fff">HE</div>
<svg style="left:0;top:0" width="1680" height="1050" viewBox="0 0 1680 1050">
 <!-- notification -->
 <path d="M25.5 1022.5h15v10h-3v4l-4-4h-8z" fill="#fff"/>
 <path d="M28 1025.5h10 M28 1027.5h10 M28 1029.5h7" stroke="#2b2b2b" stroke-width="1"/>
 <circle cx="25" cy="1037" r="7.5" fill="#2c2b29" stroke="#9a9a9a" stroke-width="1"/>
 <text x="25" y="1041" font-family="Liberation Sans" font-size="11" fill="#fff" text-anchor="middle">1</text>
 <!-- network -->
 <rect x="166.5" y="1025.5" width="12" height="8" fill="none" stroke="#fff"/>
 <path d="M172.5 1033.5v3 M168 1036.5h9" stroke="#fff"/>
 <rect x="162.5" y="1024.5" width="4" height="4" fill="#2b2b2b" stroke="#fff" stroke-width="0.8"/>
 <path d="M164.5 1029v4" stroke="#fff" stroke-width="0.8"/>
 <!-- volume -->
 <path d="M187.5 1027.5h3l4-3.5v12l-4-3.5h-3z" fill="none" stroke="#fff"/>
 <path d="M197 1027q2 3 0 6 M199.5 1025q3.5 5 0 10 M202 1023.5q5 6.5 0 13" fill="none" stroke="#fff" stroke-width="1"/>
 <!-- chevron -->
 <path d="M213.5 1033.5l6-6l6 6" fill="none" stroke="#fff" stroke-width="1.1"/>
 <!-- help -->
 <circle cx="247.5" cy="1030" r="10" fill="#fff"/>
 <circle cx="247.5" cy="1030" r="8.3" fill="#1a8fd8"/>
 <text x="247.5" y="1035.5" font-family="Liberation Sans" font-size="15" font-weight="bold" fill="#fff" text-anchor="middle">?</text>
 <circle cx="255.5" cy="1035" r="5" fill="#f2a81e"/>
 <path d="M255.5 1032.5v5" stroke="#fff" stroke-width="1.4"/>
</svg>
<svg style="left:0;top:0" width="1680" height="1050" viewBox="0 0 1680 1050">
 <defs>
  <linearGradient id="sun" x1="0" y1="0" x2="0.6" y2="1"><stop offset="0" stop-color="#ffd21a"/><stop offset="1" stop-color="#f08a00"/></linearGradient>
  <linearGradient id="edg" x1="0" y1="0.9" x2="0.9" y2="0.2"><stop offset="0" stop-color="#0c59a4"/><stop offset="0.5" stop-color="#1fa4e8"/><stop offset="1" stop-color="#5cd372"/></linearGradient>
  <linearGradient id="off" x1="0" y1="0" x2="1" y2="1"><stop offset="0" stop-color="#e84a26"/><stop offset="1" stop-color="#c71a2a"/></linearGradient>
 </defs>
 <!-- weather -->
 <circle cx="918.5" cy="1029.5" r="11" fill="url(#sun)"/>
 <path d="M919.5 1037.5 h10.5 a2.6 2.6 0 0 0 0 -5.2 a3.6 3.6 0 0 0 -6.8 -1.2 a3 3 0 0 0 -3.7 6.4z" fill="#f2f2f2"/>
 <!-- chrome -->
 <circle cx="968" cy="1030" r="12" fill="#db4437"/>
 <path d="M968 1030 L968 1042 A12 12 0 0 0 978.39 1024z" fill="#fcc934"/>
 <path d="M968 1030 L957.61 1024 A12 12 0 0 0 968 1042z" fill="#1e9e52"/>
 <circle cx="968" cy="1030" r="5.6" fill="#fff"/>
 <circle cx="968" cy="1030" r="4.4" fill="#4285f4"/>
 <!-- explorer -->
 <path d="M1006 1022h8l2 2h12v14h-22z" fill="#f5c33b"/>
 <rect x="1006" y="1026" width="22" height="12" fill="#ffd34e"/>
 <path d="M1011 1039v-7h12v7h-3v-3h-6v3z" fill="#2a7fd4"/>
 <!-- mail -->
 <rect x="1054" y="1025" width="24" height="16" fill="#1e88e5"/>
 <path d="M1054 1025 L1066 1018 L1078 1025 L1066 1032z" fill="#0d5fb0"/>
 <path d="M1054 1025 L1066 1033 L1078 1025 V1041 H1054z" fill="#3aa6f0"/>
 <path d="M1054 1041 L1066 1031 L1078 1041z" fill="#1a7ad8"/>
 <path d="M1055 1026 L1077 1026 L1066 1032.5z" fill="#f0f0f0"/>
 <!-- store -->
 <rect x="1103" y="1024" width="23" height="18" fill="#f4f4f4"/>
 <path d="M1109.5 1024v-4q0-2 2-2h6q2 0 2 2v4" fill="none" stroke="#e8e8e8" stroke-width="1.6"/>
 <rect x="1110" y="1028" width="4" height="4" fill="#f25022"/><rect x="1115" y="1028" width="4" height="4" fill="#7fba00"/>
 <rect x="1110" y="1033" width="4" height="4" fill="#00a4ef"/><rect x="1115" y="1033" width="4" height="4" fill="#ffb900"/>
 <!-- office -->
 <path d="M1155 1024 L1167 1018 L1173 1020.5 V1039.5 L1167 1042 L1155 1037z" fill="#e8641e"/>
 <path d="M1155 1024 L1167 1018 V1024 L1160.5 1025.5 V1036 L1167 1036.5 V1042 L1155 1037z" fill="#c01f32"/>
 <path d="M1155 1030 V1037 L1167 1042 V1038.5 L1160.5 1036z" fill="#e0457a" opacity="0.7"/>
 <rect x="1160.5" y="1024.5" width="6.5" height="12" fill="#474747"/>
 <!-- edge -->
 <circle cx="1213" cy="1030" r="12" fill="url(#edg)"/>
 <path d="M1201 1031 q0.5 -7 8 -9 q-4 4 -3 9 q1 7 9 8.5 q4 0.6 8 -1.5 q-4 5 -10 5 q-11 -1 -12 -12z" fill="#0c4f9c"/>
 <path d="M1207 1030 q2 -5 8 -4 q4 1 4 4 q-2 1.5 -5 1.5 q-4 0 -4 3 q0 3 3 5 q-6 -2 -6 -9.5z" fill="#1a7fd0"/>
 <!-- task view -->
 <path d="M1260 1022.5h12.5 M1260 1036.5h12.5 M1261.5 1025.5h10v8h-10z" fill="none" stroke="#fff" stroke-width="1.3"/>
 <path d="M1257 1026v10" stroke="#fff" stroke-width="1.6"/>
 <rect x="1256" y="1022" width="2.2" height="2.2" fill="#fff"/>
 <!-- search magnifier -->
 <circle cx="1614" cy="1027.5" r="5.3" fill="none" stroke="#1e1e1e" stroke-width="1.4"/>
 <path d="M1610.2 1031.3 L1605 1036.5" stroke="#1e1e1e" stroke-width="1.6"/>
 <!-- windows logo -->
 <path d="M1648 1024.5 L1654.8 1023.5 V1029.3 H1648z M1656 1023.3 L1664 1022 V1029.3 H1656z M1648 1030.5 H1654.8 V1036.5 L1648 1035.5z M1656 1030.5 H1664 V1038 L1656 1036.7z" fill="#fff"/>
</svg>

</body></html>
